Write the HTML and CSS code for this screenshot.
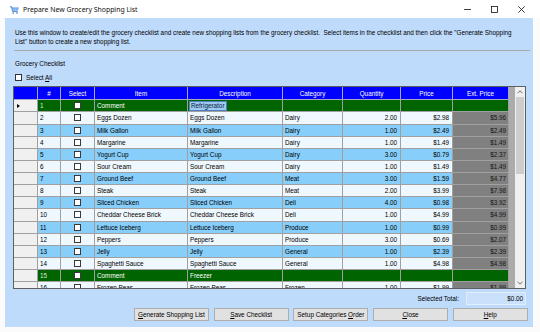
FILE: index.html
```html
<!DOCTYPE html>
<html>
<head>
<meta charset="utf-8">
<link rel="stylesheet" href="styles.css">
</head>
<body>
<div class="window">
  <div class="titlebar">
    <svg class="app-icon" width="9" height="8" viewBox="0 0 9 8">
      <path d="M0 0.8H1.6L2.6 5.4H7.6" stroke="#2f6fc4" stroke-width="0.9" fill="none"/>
      <path d="M1.9 1.6H8.8L7.9 4.6H2.5Z" fill="#4a90e2"/>
      <path d="M3.8 1.6V4.6M5.4 1.6V4.6M7 1.6V4.6M2.2 3.1H8.4" stroke="#bcd8f6" stroke-width="0.5"/>
      <circle cx="3.2" cy="7" r="0.8" fill="#2f6fc4"/>
      <circle cx="7" cy="7" r="0.8" fill="#2f6fc4"/>
    </svg>
    <span class="title">Prepare New Grocery Shopping List</span>
    <div class="controls">
      <span class="ctl"><svg width="7" height="7" viewBox="0 0 7 7"><path d="M0 3.5H7" stroke="#111" stroke-width="0.8"/></svg></span>
      <span class="ctl"><svg width="7" height="7" viewBox="0 0 7 7"><rect x="0.5" y="0.5" width="6" height="6" fill="none" stroke="#111" stroke-width="0.8"/></svg></span>
      <span class="ctl"><svg width="7" height="7" viewBox="0 0 7 7"><path d="M0.3 0.3L6.7 6.7M6.7 0.3L0.3 6.7" stroke="#111" stroke-width="0.8"/></svg></span>
    </div>
  </div>
  <div class="client">
    <p class="intro">Use this window to create/edit the grocery checklist and create new shopping lists from the grocery checklist.&nbsp; Select items in the checklist and then click the "Generate Shopping List" button to create a new shopping list.</p>
    <div class="sep"></div>
    <div class="group-label">Grocery Checklist</div>
    <label class="select-all"><span class="cb"></span><span>Select <u>A</u>ll</span></label>

    <div class="grid">
      <div class="grid-body">
        <div class="row head">
          <div class="c rh"></div><div class="c">#</div><div class="c">Select</div><div class="c">Item</div><div class="c">Description</div><div class="c">Category</div><div class="c">Quantity</div><div class="c">Price</div><div class="c">Ext. Price</div>
        </div>
        <div class="row g">
          <div class="c rh"><span class="arrow"></span></div><div class="c num">1</div><div class="c chk"><span class="cb"></span></div><div class="c">Comment</div><div class="c"><span class="hl">Refrigerator</span></div><div class="c"></div><div class="c r"></div><div class="c r"></div><div class="c r ext"></div>
        </div>
        <div class="row w">
          <div class="c rh"></div><div class="c num">2</div><div class="c chk"><span class="cb"></span></div><div class="c">Eggs Dozen</div><div class="c">Eggs Dozen</div><div class="c">Dairy</div><div class="c r">2.00</div><div class="c r">$2.98</div><div class="c r ext">$5.96</div>
        </div>
        <div class="row b">
          <div class="c rh"></div><div class="c num">3</div><div class="c chk"><span class="cb"></span></div><div class="c">Milk Gallon</div><div class="c">Milk Gallon</div><div class="c">Dairy</div><div class="c r">1.00</div><div class="c r">$2.49</div><div class="c r ext">$2.49</div>
        </div>
        <div class="row w">
          <div class="c rh"></div><div class="c num">4</div><div class="c chk"><span class="cb"></span></div><div class="c">Margarine</div><div class="c">Margarine</div><div class="c">Dairy</div><div class="c r">1.00</div><div class="c r">$1.49</div><div class="c r ext">$1.49</div>
        </div>
        <div class="row b">
          <div class="c rh"></div><div class="c num">5</div><div class="c chk"><span class="cb"></span></div><div class="c">Yogurt Cup</div><div class="c">Yogurt Cup</div><div class="c">Dairy</div><div class="c r">3.00</div><div class="c r">$0.79</div><div class="c r ext">$2.37</div>
        </div>
        <div class="row w">
          <div class="c rh"></div><div class="c num">6</div><div class="c chk"><span class="cb"></span></div><div class="c">Sour Cream</div><div class="c">Sour Cream</div><div class="c">Dairy</div><div class="c r">1.00</div><div class="c r">$1.49</div><div class="c r ext">$1.49</div>
        </div>
        <div class="row b">
          <div class="c rh"></div><div class="c num">7</div><div class="c chk"><span class="cb"></span></div><div class="c">Ground Beef</div><div class="c">Ground Beef</div><div class="c">Meat</div><div class="c r">3.00</div><div class="c r">$1.59</div><div class="c r ext">$4.77</div>
        </div>
        <div class="row w">
          <div class="c rh"></div><div class="c num">8</div><div class="c chk"><span class="cb"></span></div><div class="c">Steak</div><div class="c">Steak</div><div class="c">Meat</div><div class="c r">2.00</div><div class="c r">$3.99</div><div class="c r ext">$7.98</div>
        </div>
        <div class="row b">
          <div class="c rh"></div><div class="c num">9</div><div class="c chk"><span class="cb"></span></div><div class="c">Sliced Chicken</div><div class="c">Sliced Chicken</div><div class="c">Deli</div><div class="c r">4.00</div><div class="c r">$0.98</div><div class="c r ext">$3.92</div>
        </div>
        <div class="row w">
          <div class="c rh"></div><div class="c num">10</div><div class="c chk"><span class="cb"></span></div><div class="c">Cheddar Cheese Brick</div><div class="c">Cheddar Cheese Brick</div><div class="c">Deli</div><div class="c r">1.00</div><div class="c r">$4.99</div><div class="c r ext">$4.99</div>
        </div>
        <div class="row b">
          <div class="c rh"></div><div class="c num">11</div><div class="c chk"><span class="cb"></span></div><div class="c">Lettuce Iceberg</div><div class="c">Lettuce Iceberg</div><div class="c">Produce</div><div class="c r">1.00</div><div class="c r">$0.99</div><div class="c r ext">$0.99</div>
        </div>
        <div class="row w">
          <div class="c rh"></div><div class="c num">12</div><div class="c chk"><span class="cb"></span></div><div class="c">Peppers</div><div class="c">Peppers</div><div class="c">Produce</div><div class="c r">3.00</div><div class="c r">$0.69</div><div class="c r ext">$2.07</div>
        </div>
        <div class="row b">
          <div class="c rh"></div><div class="c num">13</div><div class="c chk"><span class="cb"></span></div><div class="c">Jelly</div><div class="c">Jelly</div><div class="c">General</div><div class="c r">1.00</div><div class="c r">$2.39</div><div class="c r ext">$2.39</div>
        </div>
        <div class="row w">
          <div class="c rh"></div><div class="c num">14</div><div class="c chk"><span class="cb"></span></div><div class="c">Spaghetti Sauce</div><div class="c">Spaghetti Sauce</div><div class="c">General</div><div class="c r">1.00</div><div class="c r">$4.98</div><div class="c r ext">$4.98</div>
        </div>
        <div class="row g">
          <div class="c rh"></div><div class="c num">15</div><div class="c chk"><span class="cb"></span></div><div class="c">Comment</div><div class="c">Freezer</div><div class="c"></div><div class="c r"></div><div class="c r"></div><div class="c r ext"></div>
        </div>
        <div class="row w">
          <div class="c rh"></div><div class="c num">16</div><div class="c chk"><span class="cb"></span></div><div class="c">Frozen Peas</div><div class="c">Frozen Peas</div><div class="c">Frozen</div><div class="c r">1.00</div><div class="c r">$1.99</div><div class="c r ext">$1.99</div>
        </div>
      </div>
      <div class="grid-gap"></div>
      <div class="scrollbar">
        <div class="sb-btn"><svg width="6" height="4" viewBox="0 0 6 4"><path d="M0.5 3.3L3 0.8L5.5 3.3" stroke="#606060" stroke-width="0.9" fill="none"/></svg></div>
        <div class="sb-track"><div class="sb-thumb"></div></div>
        <div class="sb-btn"><svg width="6" height="4" viewBox="0 0 6 4"><path d="M0.5 0.7L3 3.2L5.5 0.7" stroke="#606060" stroke-width="0.9" fill="none"/></svg></div>
      </div>
    </div>

    <div class="total-row">
      <span class="total-label">Selected Total:</span>
      <div class="total-box">$0.00</div>
    </div>

    <div class="buttons">
      <button class="btn"><span><u>G</u>enerate Shopping List</span></button>
      <button class="btn"><span><u>S</u>ave Checklist</span></button>
      <button class="btn"><span>Setup Categories <u>O</u>rder</span></button>
      <button class="btn"><span><u>C</u>lose</span></button>
      <button class="btn"><span><u>H</u>elp</span></button>
    </div>
  </div>
</div>
</body>
</html>
```

FILE: styles.css
```css
* { box-sizing: border-box; }
html, body { margin: 0; padding: 0; }
body {
  width: 540px;
  height: 332px;
  overflow: hidden;
  background: #f3f3f3;
  font-family: "Liberation Sans", Arial, sans-serif;
}
.window {
  width: 540px;
  height: 332px;
  background: #fbfbfb;
  display: flex;
  flex-direction: column;
}
.titlebar {
  height: 18px;
  flex: none;
  display: flex;
  align-items: center;
  background: #ffffff;
  padding: 0 5.5px 0 10px;
}
.app-icon { flex: none; margin-top: 1px; }
.title {
  margin-left: 4px;
  font-family: "Noto Sans", "Open Sans", sans-serif;
  font-size: 6.9px;
  color: #111;
  white-space: nowrap;
}
.controls { margin-left: auto; display: flex; }
.ctl {
  width: 27px;
  height: 18px;
  display: flex;
  align-items: center;
  justify-content: center;
}
.client {
  flex: none;
  height: 309px;
  margin: 0 7px 0 5px;
  background: #bfdbfb;
  padding-top: 11px;
  font-size: 6.35px;
  color: #000;
}
.intro {
  margin: 0 8px 0 10px;
  line-height: 8.6px;
  height: 17.2px;
}
.sep {
  margin: 3.8px 3px 0 9px;
  height: 1px;
  background: #a8a8a8;
}
.group-label {
  margin: 8.6px 0 0 10px;
  line-height: 8.6px;
  height: 8.6px;
}
.select-all {
  margin: 5.5px 0 0 10px;
  height: 7px;
  display: flex;
  align-items: center;
  gap: 4px;
  line-height: 7px;
}
.cb {
  display: inline-block;
  width: 7px;
  height: 7px;
  background: #ffffff;
  border: 1px solid #333333;
  flex: none;
}
.grid {
  margin: 5.3px 0 0 8px;
  width: 513px;
  height: 203px;
  border: 1px solid #5f5f5f;
  background: #ababab;
  display: flex;
}
.grid-body {
  width: 495px;
  height: 201px;
  overflow: hidden;
  flex: none;
}
.grid-gap { width: 6px; flex: none; }
.row {
  display: grid;
  grid-template-columns: 24px 23px 34px 93px 95px 60px 58px 52px 56px;
  height: 12.13px;
}
.row.head { height: 13.3px; background: #0000ff; color: #ffffff; }
.c {
  border-right: 1px solid #a0a0a0;
  border-bottom: 1px solid #a0a0a0;
  padding: 0 2px;
  white-space: nowrap;
  overflow: hidden;
  display: flex;
  align-items: center;
}
.row.head .c { justify-content: center; border-color: #a6a6c8; }
.row.w { background: #f0f8ff; }
.row.b { background: #87cefa; }
.row.g { background: #006400; color: #ffffff; }
.row.g .num { color: #d8e8d8; }
.c.rh { background: #f0f0f0; border-color: #a0a0a0; }
.row.head .c.rh { background: #0000ff; }
.c.r { justify-content: flex-end; padding-right: 3px; }
.c.ext { background: #808080; color: #141414; padding-right: 2px; }
.row.g .c.ext { background: #006400; }
.c.chk { justify-content: center; }
.c.chk .cb { border-color: #3a3a3a; }
.arrow {
  width: 0;
  height: 0;
  margin-left: 1px;
  border-left: 3px solid #000;
  border-top: 2.5px solid transparent;
  border-bottom: 2.5px solid transparent;
}
.hl {
  background: #9ccaf3;
  color: #0c1c3c;
  padding: 0 1px;
  line-height: 8px;
  outline: 0.5px solid #4d7fbf;
}
.scrollbar {
  width: 10px;
  flex: none;
  background: #f0f0f0;
  display: flex;
  flex-direction: column;
}
.sb-btn {
  height: 10px;
  flex: none;
  display: flex;
  align-items: center;
  justify-content: center;
}
.sb-track { flex: 1; padding: 0 1px; }
.sb-thumb { height: 77px; background: #cdcdcd; }
.total-row {
  margin: 3px 0 0 0;
  height: 13px;
  display: flex;
  align-items: center;
  justify-content: flex-end;
  padding-right: 7px;
}
.total-label { margin-right: 7px; }
.total-box {
  width: 60px;
  height: 13px;
  background: #c9e1fb;
  border: 1px solid #e2edfa;
  display: flex;
  align-items: center;
  justify-content: flex-end;
  padding-right: 2px;
}
.buttons {
  margin-top: 3px;
  height: 13px;
  display: flex;
  justify-content: flex-end;
  gap: 4.7px;
  padding-right: 5.3px;
}
.btn {
  width: 75px;
  height: 13px;
  margin: 0;
  padding: 0;
  background: #e1e1e1;
  border: 1px solid #adadad;
  font-family: "Liberation Sans", Arial, sans-serif;
  font-size: 6.35px;
  line-height: 11px;
  color: #000;
  text-align: center;
  white-space: nowrap;
  border-radius: 0;
}
u { text-decoration-thickness: 0.5px; text-underline-offset: 1px; }
```
